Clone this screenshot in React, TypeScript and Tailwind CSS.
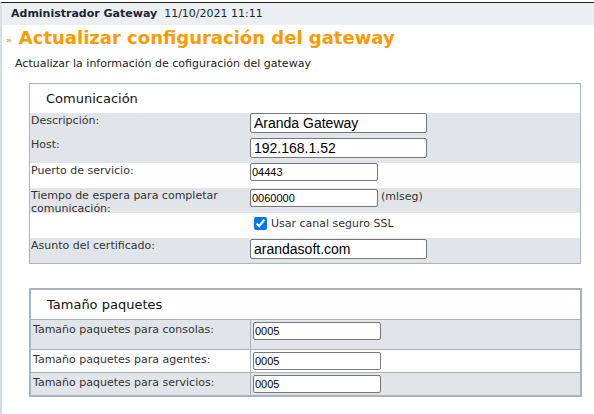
import React from "react";

const font = "font-['DejaVu_Sans',Verdana,sans-serif]";
const inFont = "font-['Liberation_Sans',Arial,sans-serif]";

function BigInput({ value, mt }: { value: string; mt: string }) {
  return (
    <input
      defaultValue={value}
      className={`${inFont} ${mt} block w-[177px] h-[20px] border border-[#767676] rounded-[2px] bg-white pl-[3px] text-[14px] text-black outline-none`}
    />
  );
}

function SmallInput({ value, mt, w = "w-[128px]" }: { value: string; mt: string; w?: string }) {
  return (
    <input
      defaultValue={value}
      className={`${inFont} ${mt} ${w} block h-[18px] border border-[#767676] rounded-[2px] bg-white pl-[1px] text-[11px] text-black outline-none`}
    />
  );
}

export default function App() {
  return (
    <div className={`${font} w-[594px] h-[414px] bg-white overflow-hidden pt-[2px]`}>
      <div className="h-[412px] border-t border-t-[#1f1f1f] border-l-2 border-l-[#d6dde3]">
        {/* header bar */}
        <div className="h-[22px] bg-[#ebeff2] flex items-center pl-[9px] text-[11px] text-[#1c2631]">
          <span className="font-bold">Administrador Gateway</span>
          <span className="ml-[7px]">11/10/2021 11:11</span>
        </div>
        {/* title */}
        <div className="h-[26px] flex items-center pl-[4px] text-[#ff9900]">
          <span className="text-[9px] font-bold leading-none mt-[4px]">»</span>
          <span className="ml-[7px] text-[18px] font-bold leading-[22px]">
            Actualizar configuración del gateway
          </span>
        </div>
        <div className="mt-[6px] pl-[13px] text-[11px] leading-[13px] text-[#222]">
          Actualizar la información de cofiguración del gateway
        </div>

        {/* Comunicación */}
        <div className="ml-[27px] mt-[13px] w-[552px] border border-[#a9b3bb] text-[11px] leading-[13px] text-[#333]">
          <div className="h-[29px] flex items-center pl-[16px] text-[13px] text-[#111]">Comunicación</div>

          <div className="h-[24px] flex bg-[#e1e5e9]">
            <div className="w-[220px] pl-[1px] pt-[1px]">Descripción:</div>
            <BigInput value="Aranda Gateway" mt="mt-0" />
          </div>
          <div className="h-[26px] flex bg-[#e1e5e9]">
            <div className="w-[220px] pl-[1px] pt-[1px]">Host:</div>
            <BigInput value="192.168.1.52" mt="mt-[1px]" />
          </div>
          <div className="h-[25px] flex bg-white">
            <div className="w-[220px] pl-[1px] pt-[1px]">Puerto de servicio:</div>
            <SmallInput value="04443" mt="mt-0" />
          </div>
          <div className="h-[25px] flex bg-[#e1e5e9]">
            <div className="w-[220px] pl-[1px] pt-[1px]">
              Tiempo de espera para completar
              <br />
              comunicación:
            </div>
            <div className="flex items-start mt-[1px]">
              <SmallInput value="0060000" mt="mt-0" />
              <span className="ml-[3px] mt-[1px]">(mlseg)</span>
            </div>
          </div>
          <div className="h-[25px] flex bg-white">
            <div className="w-[220px]" />
            <label className="flex items-center mt-[4px] ml-[4px] h-[13px]">
              <input type="checkbox" defaultChecked className="w-[13px] h-[13px] m-0 accent-[#0075ff]" />
              <span className="ml-[4px]">Usar canal seguro SSL</span>
            </label>
          </div>
          <div className="h-[25px] flex bg-[#e1e5e9]">
            <div className="w-[220px] pl-[1px] pt-[1px]">Asunto del certificado:</div>
            <BigInput value="arandasoft.com" mt="mt-[1px]" />
          </div>
        </div>

        {/* Tamaño paquetes */}
        <div className="ml-[27px] mt-[24px] w-[553px] border-2 border-[#a9b3bb] text-[11px] leading-[13px] text-[#333]">
          <div className="h-[30px] border-b border-[#a9b3bb] flex items-center pl-[16px] text-[13px] text-[#111]">
            Tamaño paquetes
          </div>
          <div className="h-[30px] flex bg-[#e1e5e9] border-b border-[#a9b3bb]">
            <div className="w-[220px] border-r border-[#a9b3bb] pl-[2px] pt-[3px]">Tamaño paquetes para consolas:</div>
            <div className="pl-[2px]">
              <SmallInput value="0005" mt="mt-[2px]" />
            </div>
          </div>
          <div className="h-[23px] flex bg-white border-b border-[#a9b3bb]">
            <div className="w-[220px] border-r border-[#a9b3bb] pl-[2px] pt-[3px]">Tamaño paquetes para agentes:</div>
            <div className="pl-[2px]">
              <SmallInput value="0005" mt="mt-[2px]" />
            </div>
          </div>
          <div className="h-[22px] flex bg-[#e1e5e9]">
            <div className="w-[220px] border-r border-[#a9b3bb] pl-[2px] pt-[3px]">Tamaño paquetes para servicios:</div>
            <div className="pl-[2px]">
              <SmallInput value="0005" mt="mt-[2px]" />
            </div>
          </div>
        </div>
      </div>
    </div>
  );
}
